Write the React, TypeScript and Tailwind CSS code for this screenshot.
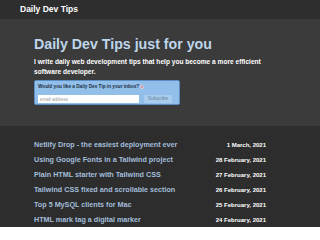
const posts = [
  { title: "Netlify Drop - the easiest deployment ever", date: "1 March, 2021" },
  { title: "Using Google Fonts in a Tailwind project", date: "28 February, 2021" },
  { title: "Plain HTML starter with Tailwind CSS", date: "27 February, 2021" },
  { title: "Tailwind CSS fixed and scrollable section", date: "26 February, 2021" },
  { title: "Top 5 MySQL clients for Mac", date: "25 February, 2021" },
  { title: "HTML mark tag a digital marker", date: "24 February, 2021" },
];

export default function App() {
  return (
    <div className="min-h-[225px] bg-[#2d2d2d] font-['Liberation_Sans',Arial,sans-serif] font-bold">
      <header className="flex h-[19px] items-center bg-[#2e2e2e] px-[20px] text-[8.5px] leading-none text-white">
        Daily Dev Tips
      </header>

      <section className="bg-[#3b3b3b] pb-[21px] pl-[34px] pt-[18px]">
        <div className="w-[232px]">
          <h1 className="text-[14.2px] leading-[14px] text-[#bed6ea]">
            Daily Dev Tips just for you
          </h1>
          <p className="mt-[6px] text-[6.6px] leading-[10px] text-white">
            I write daily web development tips that help you become a more
            efficient software developer.
          </p>

          <form className="mt-[3px] w-[146px] rounded-[2px] border border-[#5c8ec4] bg-[#92bfe9] px-[3px] pb-[1px] pt-[3px]">
            <div className="flex h-[6px] items-center gap-[1px] text-[4.7px] leading-none text-[#1f2f44]">
              <span>Would you like a Daily Dev Tip in your inbox?</span>
              <span className="flex h-[4px] w-[4px] items-center justify-center rounded-full bg-[#e6c6d6] text-[3px] text-[#8a3d5c]">
                ×
              </span>
            </div>
            <div className="mt-[5px] flex gap-[5px]">
              <input
                placeholder="email address"
                className="h-[8px] w-[101px] bg-white px-[2px] text-[4.5px] font-normal text-[#555] outline-none placeholder:text-[#9a9a9a]"
              />
              <button
                type="button"
                className="h-[8px] w-[28px] rounded-[1px] bg-[#a9cdef] text-[4.5px] font-normal leading-none text-[#6b7f95]"
              >
                Subscribe
              </button>
            </div>
          </form>
        </div>
      </section>

      <section className="pl-[34px] pt-[11px]">
        <ul className="w-[232px]">
          {posts.map((post) => (
            <li key={post.title} className="flex h-[15px] items-center justify-between">
              <span className="text-[7.2px] leading-none text-[#a3bedb]">{post.title}</span>
              <span className="text-[6px] leading-none text-white">{post.date}</span>
            </li>
          ))}
        </ul>
      </section>
    </div>
  );
}
